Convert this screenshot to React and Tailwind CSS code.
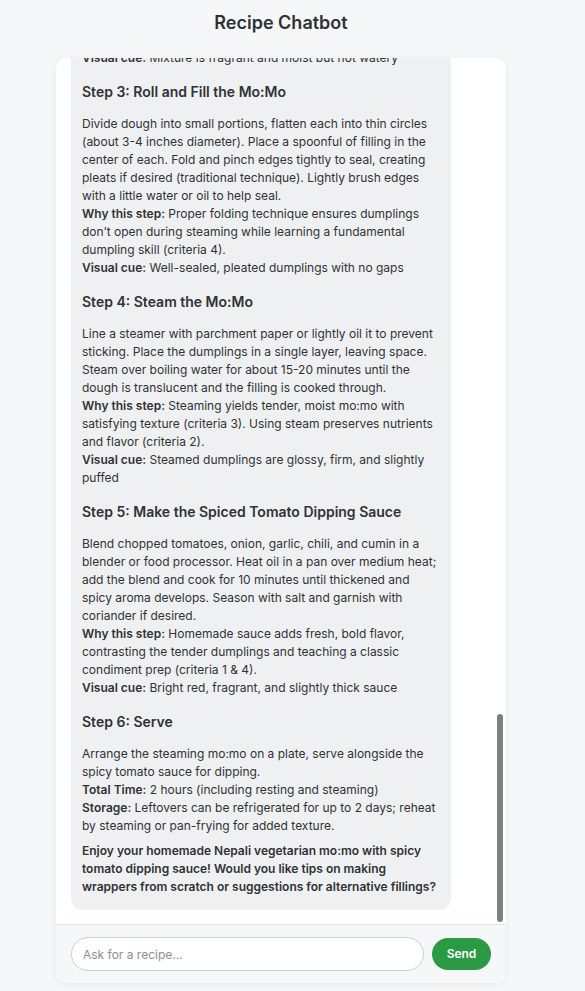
import React, { useLayoutEffect, useRef } from 'react';

// recipe reply, broken into blocks: h = step heading, p = lines (each line may start with a bold label)
const recipe = [
  { type: 'h', text: 'Nepali Vegetarian Mo:Mo with Spiced Tomato Dipping Sauce' },
  { type: 'p', lines: [{ text: 'Here is a hands-on recipe that meets your goals: authentic Himalayan flavor (criteria 1), a light and nourishing vegetarian meal (criteria 2), a satisfying tender-yet-chewy texture (criteria 3), and a new folding technique to practice (criteria 4).' }] },
  { type: 'h', text: 'Servings & Timing' },
  { type: 'p', lines: [
    { label: 'Servings:', text: '4 (about 30 dumplings)' },
    { label: 'Prep time:', text: '1 hour 20 minutes' },
    { label: 'Cook time:', text: '40 minutes' },
    { label: 'Difficulty:', text: 'Intermediate' },
  ] },
  { type: 'h', text: 'Ingredients' },
  { type: 'p', lines: [
    { label: 'For the dough:', text: '' },
    { text: '• 2 cups all-purpose flour' },
    { text: '• 1/2 teaspoon salt' },
    { text: '• 1 tablespoon vegetable oil' },
    { text: '• About 3/4 cup lukewarm water' },
  ] },
  { type: 'p', lines: [
    { label: 'For the filling:', text: '' },
    { text: '• 2 cups finely shredded cabbage' },
    { text: '• 1 medium carrot, grated' },
    { text: '• 1 cup finely chopped mushrooms' },
    { text: '• 100 g paneer or firm tofu, crumbled' },
    { text: '• 1 small onion, minced' },
    { text: '• 3 green onions, finely sliced' },
    { text: '• 3 cloves garlic, minced' },
    { text: '• 1 tablespoon grated ginger' },
    { text: '• 1 green chili, minced' },
    { text: '• 1/2 cup fresh coriander, chopped' },
    { text: '• 1 teaspoon ground cumin' },
    { text: '• 1/2 teaspoon turmeric' },
    { text: '• 1/2 teaspoon Sichuan pepper (timur), optional' },
    { text: '• 1 tablespoon mustard oil or vegetable oil' },
    { text: '• Salt to taste' },
  ] },
  { type: 'p', lines: [
    { label: 'For the spiced tomato dipping sauce:', text: '' },
    { text: '• 3 ripe tomatoes, chopped' },
    { text: '• 1/2 small onion' },
    { text: '• 2 cloves garlic' },
    { text: '• 1-2 dried red chilies' },
    { text: '• 1/2 teaspoon cumin seeds, toasted' },
    { text: '• 1 tablespoon sesame seeds, toasted' },
    { text: '• 1 tablespoon vegetable oil' },
    { text: '• Salt and fresh coriander to finish' },
  ] },
  { type: 'h', text: 'Equipment' },
  { type: 'p', lines: [
    { text: '• Mixing bowls and a clean kneading surface' },
    { text: '• Rolling pin' },
    { text: '• Steamer (bamboo or metal) with lid' },
    { text: '• Blender or food processor' },
    { text: '• Parchment paper' },
    { text: '• Clean kitchen towel' },
  ] },
  { type: 'h', text: 'Step 1: Make the Dough' },
  { type: 'p', lines: [
    { text: 'In a bowl, mix flour and salt. Add oil and gradually pour in water while mixing until a smooth, firm dough forms. Knead for 8-10 minutes until elastic. Cover with a damp cloth and rest for 30 minutes.' },
    { label: 'Why this step:', text: 'Kneading develops gluten so wrappers stay thin but strong, and resting relaxes the dough for easy rolling (criteria 3 & 4).' },
    { label: 'Visual cue:', text: 'Dough is smooth and springs back slowly when pressed' },
  ] },
  { type: 'h', text: 'Step 2: Prepare the Filling' },
  { type: 'p', lines: [
    { text: 'Sprinkle salt over the shredded cabbage and let sit 10 minutes, then squeeze out excess water. Heat oil in a pan, sauté onion, garlic, ginger and chili until fragrant. Add mushrooms and cook until their moisture evaporates. Remove from heat and combine with cabbage, carrot, paneer, green onions, coriander, cumin, turmeric and timur. Season with salt.' },
    { label: 'Why this step:', text: 'Removing water keeps wrappers from tearing, and blooming aromatics builds the classic mo:mo flavor (criteria 1 & 3).' },
    { label: 'Visual cue:', text: 'Mixture is fragrant and moist but not watery' },
  ] },
  { type: 'h', text: 'Step 3: Roll and Fill the Mo:Mo' },
  { type: 'p', lines: [
    { text: 'Divide dough into small portions, flatten each into thin circles (about 3-4 inches diameter). Place a spoonful of filling in the center of each. Fold and pinch edges tightly to seal, creating pleats if desired (traditional technique). Lightly brush edges with a little water or oil to help seal.' },
    { label: 'Why this step:', text: 'Proper folding technique ensures dumplings don’t open during steaming while learning a fundamental dumpling skill (criteria 4).' },
    { label: 'Visual cue:', text: 'Well-sealed, pleated dumplings with no gaps' },
  ] },
  { type: 'h', text: 'Step 4: Steam the Mo:Mo' },
  { type: 'p', lines: [
    { text: 'Line a steamer with parchment paper or lightly oil it to prevent sticking. Place the dumplings in a single layer, leaving space. Steam over boiling water for about 15-20 minutes until the dough is translucent and the filling is cooked through.' },
    { label: 'Why this step:', text: 'Steaming yields tender, moist mo:mo with satisfying texture (criteria 3). Using steam preserves nutrients and flavor (criteria 2).' },
    { label: 'Visual cue:', text: 'Steamed dumplings are glossy, firm, and slightly puffed' },
  ] },
  { type: 'h', text: 'Step 5: Make the Spiced Tomato Dipping Sauce' },
  { type: 'p', lines: [
    { text: 'Blend chopped tomatoes, onion, garlic, chili, and cumin in a blender or food processor. Heat oil in a pan over medium heat; add the blend and cook for 10 minutes until thickened and spicy aroma develops. Season with salt and garnish with coriander if desired.' },
    { label: 'Why this step:', text: 'Homemade sauce adds fresh, bold flavor, contrasting the tender dumplings and teaching a classic condiment prep (criteria 1 & 4).' },
    { label: 'Visual cue:', text: 'Bright red, fragrant, and slightly thick sauce' },
  ] },
  { type: 'h', text: 'Step 6: Serve' },
  { type: 'p', lines: [
    { text: 'Arrange the steaming mo:mo on a plate, serve alongside the spicy tomato sauce for dipping.' },
    { label: 'Total Time:', text: '2 hours (including resting and steaming)' },
    { label: 'Storage:', text: 'Leftovers can be refrigerated for up to 2 days; reheat by steaming or pan-frying for added texture.' },
  ] },
  { type: 'b', text: 'Enjoy your homemade Nepali vegetarian mo:mo with spicy tomato dipping sauce! Would you like tips on making wrappers from scratch or suggestions for alternative fillings?' },
];

const Block = ({ block }) => {
  if (block.type === 'h') {
    return <h3 className="text-[14px] leading-[22px] font-semibold mt-[14px] mb-[12px]">{block.text}</h3>;
  }
  if (block.type === 'b') {
    return <p className="my-[7px] font-semibold">{block.text}</p>;
  }
  return (
    <p className="my-[7px]">
      {block.lines.map((line, i) => (
        <span key={i} className="block">
          {line.label && <strong className="font-semibold">{line.label}</strong>}
          {line.label && line.text ? ' ' : ''}
          {line.text}
        </span>
      ))}
    </p>
  );
};

const App = () => {
  const listRef = useRef(null);

  useLayoutEffect(() => {
    // keep the newest message in view
    if (listRef.current) {
      listRef.current.scrollTop = listRef.current.scrollHeight;
    }
  }, []);

  return (
    <div className="min-h-screen bg-[#f6f7f9] font-['Inter','Noto_Sans',sans-serif] text-[#2f3236]">
      <div className="w-[562px] flex flex-col items-center">
        <h1 className="text-[18px] leading-[22px] font-semibold text-[#2e3135] mt-[12px]">Recipe Chatbot</h1>

        <div className="relative mt-[24px] w-[450px] h-[925px] bg-white rounded-[10px] shadow-[0_1px_6px_rgba(0,0,0,0.06)] flex flex-col overflow-hidden">
          {/* messages */}
          <div
            ref={listRef}
            className="flex-1 overflow-y-auto px-[15px] pt-[15px] pb-[14px] flex flex-col gap-[12px] [scrollbar-width:none] [&::-webkit-scrollbar]:hidden"
          >
            <div className="self-start max-w-[380px] bg-[#eff0f2] rounded-[12px] px-[11px] py-[7px] text-[12px] leading-[18px]">
              <p className="my-[7px]">Hi! I’m your recipe assistant. Tell me what you’d like to cook, any dietary needs, or ingredients you have on hand.</p>
            </div>
            <div className="self-end max-w-[300px] bg-[#2b9a44] text-white rounded-[12px] px-[11px] py-[14px] text-[12px] leading-[18px]">
              Can you give me a vegetarian Nepali mo:mo recipe with a spicy tomato dipping sauce? I’d like to learn a new technique too.
            </div>
            <div className="self-start w-[380px] bg-[#eff0f2] rounded-[12px] px-[11px] py-[7px] text-[12px] leading-[18px]">
              {recipe.map((block, i) => (
                <Block key={i} block={block} />
              ))}
            </div>
          </div>

          {/* overlay scroll thumb, sits over the message list */}
          <div className="absolute right-[3px] top-[656px] w-[6px] h-[208px] rounded-full bg-[#808080]" />

          {/* input bar */}
          <div className="border-t border-[#e1e3e6] bg-[#f6f7f9] px-[15px] pt-[12px] pb-[12px] flex items-center gap-[8px]">
            <input
              type="text"
              placeholder="Ask for a recipe..."
              className="flex-1 h-[34px] rounded-full border border-[#c9ccd1] bg-white px-[11px] text-[12px] outline-none placeholder:text-[#8b8f95]"
            />
            <button className="w-[59px] h-[32px] rounded-full bg-[#2b9a44] text-white text-[12px] font-semibold">
              Send
            </button>
          </div>
        </div>
      </div>
    </div>
  );
};

export default App;
